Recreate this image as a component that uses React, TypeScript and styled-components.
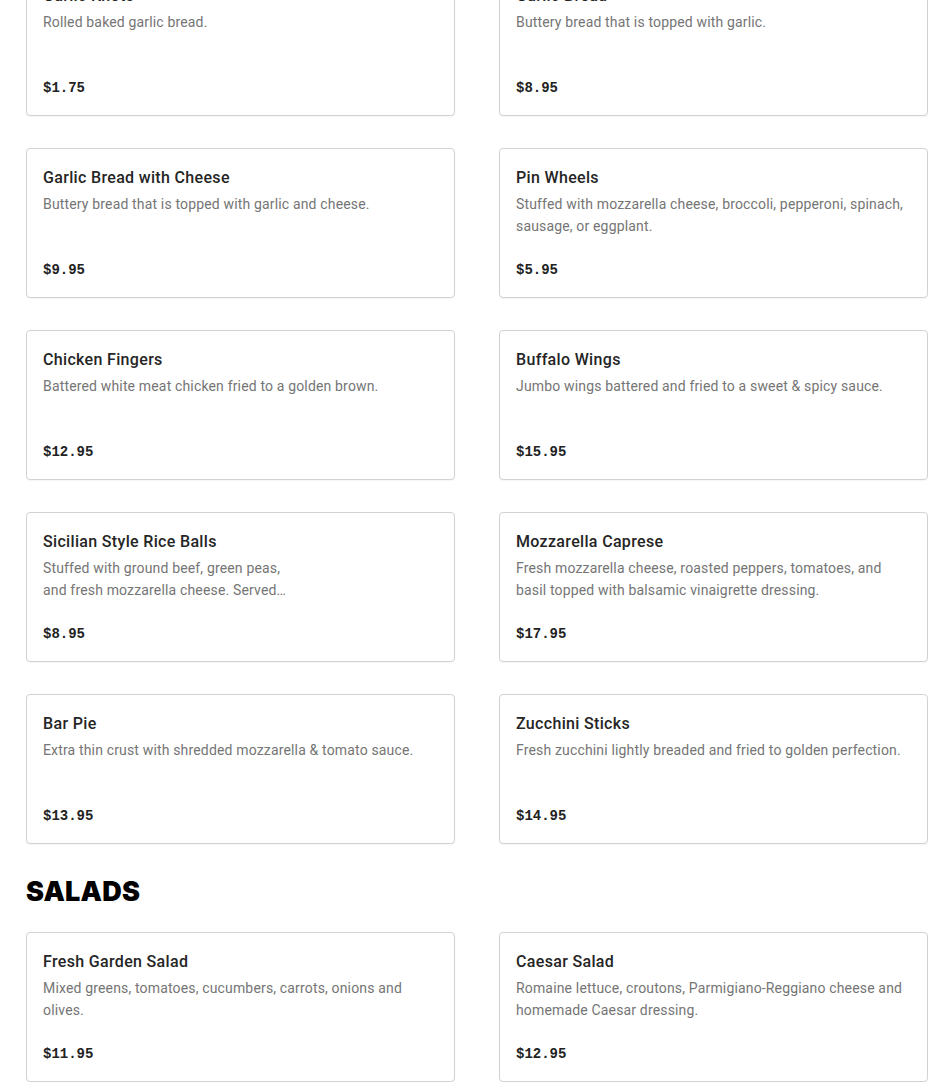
import React from "react";
import styled, { createGlobalStyle } from "styled-components";

const GlobalStyle = createGlobalStyle`
  html, body { margin: 0; padding: 0; background: #fff; }
  body { font-family: Roboto, "Noto Sans", Arial, sans-serif; -webkit-font-smoothing: antialiased; }
  * { box-sizing: border-box; }
`;

const Page = styled.main`
  width: 902px;
  margin: -34px 0 0 26px;
  overflow: hidden;
`;

const Section = styled.section`
  display: flex;
  flex-direction: column;
`;

const SectionTitle = styled.h2`
  margin: 32px 0 24px;
  font-family: Inter, "Liberation Sans", Arial, sans-serif;
  font-weight: 900;
  font-size: 27px;
  line-height: 32px;
  letter-spacing: 0.2px;
  color: #000;
  text-transform: uppercase;
`;

const Grid = styled.div`
  display: grid;
  grid-template-columns: 429px 429px;
  column-gap: 44px;
  row-gap: 32px;
`;

const Card = styled.article`
  height: 150px;
  display: flex;
  flex-direction: column;
  padding: 17px 16px 17px;
  border: 1px solid #d2d2d2;
  border-radius: 4px;
  background: #fff;
  box-shadow: 0 1px 1px rgba(0, 0, 0, 0.04);
`;

const Name = styled.h3`
  margin: 0;
  font-family: Roboto, "Noto Sans", Arial, sans-serif;
  font-weight: 500;
  font-size: 16px;
  line-height: 24px;
  letter-spacing: 0.33px;
  color: #252525;
`;

const Desc = styled.p`
  margin: 3px 0 0;
  font-size: 14px;
  line-height: 22px;
  letter-spacing: 0.16px;
  color: #757575;
  display: -webkit-box;
  -webkit-line-clamp: 2;
  -webkit-box-orient: vertical;
  overflow: hidden;
`;

const Price = styled.div`
  margin-top: auto;
  font-family: "Liberation Mono", "DejaVu Sans Mono", monospace;
  font-weight: 700;
  font-size: 14px;
  line-height: 20px;
  color: #222;
`;

type Item = { name: string; desc: React.ReactNode; price: string };

const appetizers: Item[] = [
  { name: "Garlic Knots", desc: "Rolled baked garlic bread.", price: "$1.75" },
  { name: "Garlic Bread", desc: "Buttery bread that is topped with garlic.", price: "$8.95" },
  { name: "Garlic Bread with Cheese", desc: "Buttery bread that is topped with garlic and cheese.", price: "$9.95" },
  { name: "Pin Wheels", desc: "Stuffed with mozzarella cheese, broccoli, pepperoni, spinach, sausage, or eggplant.", price: "$5.95" },
  { name: "Chicken Fingers", desc: "Battered white meat chicken fried to a golden brown.", price: "$12.95" },
  { name: "Buffalo Wings", desc: "Jumbo wings battered and fried to a sweet & spicy sauce.", price: "$15.95" },
  {
    name: "Sicilian Style Rice Balls",
    desc: (
      <>
        Stuffed with ground beef, green peas,
        <br />
        and fresh mozzarella cheese. Served…
      </>
    ),
    price: "$8.95",
  },
  { name: "Mozzarella Caprese", desc: "Fresh mozzarella cheese, roasted peppers, tomatoes, and basil topped with balsamic vinaigrette dressing.", price: "$17.95" },
  { name: "Bar Pie", desc: "Extra thin crust with shredded mozzarella & tomato sauce.", price: "$13.95" },
  { name: "Zucchini Sticks", desc: "Fresh zucchini lightly breaded and fried to golden perfection.", price: "$14.95" },
];

const salads: Item[] = [
  { name: "Fresh Garden Salad", desc: "Mixed greens, tomatoes, cucumbers, carrots, onions and olives.", price: "$11.95" },
  { name: "Caesar Salad", desc: "Romaine lettuce, croutons, Parmigiano-Reggiano cheese and homemade Caesar dressing.", price: "$12.95" },
];

const MenuCard = ({ item }: { item: Item }) => (
  <Card>
    <Name>{item.name}</Name>
    <Desc>{item.desc}</Desc>
    <Price>{item.price}</Price>
  </Card>
);

export default function App() {
  return (
    <>
      <GlobalStyle />
      <Page>
        <Section>
          <Grid>
            {appetizers.map((it) => (
              <MenuCard key={it.name} item={it} />
            ))}
          </Grid>
        </Section>
        <Section>
          <SectionTitle>Salads</SectionTitle>
          <Grid>
            {salads.map((it) => (
              <MenuCard key={it.name} item={it} />
            ))}
          </Grid>
        </Section>
      </Page>
    </>
  );
}
